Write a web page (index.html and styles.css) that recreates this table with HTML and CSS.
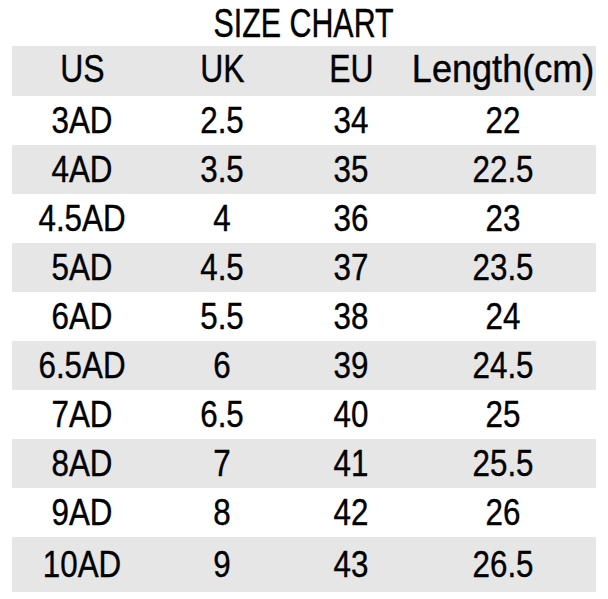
FILE: index.html
```html
<!DOCTYPE html>
<html>
<head>
<meta charset="utf-8">
<link rel="stylesheet" href="styles.css">
</head>
<body>
<div class="chart">
  <h1 class="title"><span>SIZE CHART</span></h1>
  <div class="row shade head"><span>US</span><span>UK</span><span>EU</span><span class="wide">Length(cm)</span></div>
  <div class="row"><span>3AD</span><span>2.5</span><span>34</span><span>22</span></div>
  <div class="row shade"><span>4AD</span><span>3.5</span><span>35</span><span>22.5</span></div>
  <div class="row"><span>4.5AD</span><span>4</span><span>36</span><span>23</span></div>
  <div class="row shade"><span>5AD</span><span>4.5</span><span>37</span><span>23.5</span></div>
  <div class="row"><span>6AD</span><span>5.5</span><span>38</span><span>24</span></div>
  <div class="row shade"><span>6.5AD</span><span>6</span><span>39</span><span>24.5</span></div>
  <div class="row"><span>7AD</span><span>6.5</span><span>40</span><span>25</span></div>
  <div class="row shade"><span>8AD</span><span>7</span><span>41</span><span>25.5</span></div>
  <div class="row"><span>9AD</span><span>8</span><span>42</span><span>26</span></div>
  <div class="row shade last"><span>10AD</span><span>9</span><span>43</span><span>26.5</span></div>
</div>
</body>
</html>
```
FILE: styles.css
```css
html, body {
  margin: 0;
  padding: 0;
  background: #ffffff;
}
.chart {
  width: 608px;
  font-family: "Liberation Sans", Arial, sans-serif;
  color: #000;
  -webkit-text-stroke: 0.4px #000;
}
.title {
  margin: 0;
  height: 46px;
  display: flex;
  align-items: center;
  justify-content: center;
  font-size: 40px;
  font-weight: normal;
  line-height: 1;
}
.title span {
  display: inline-block;
  transform: scaleX(0.76);
}
.row {
  margin: 0 12px;
  height: 49px;
  display: grid;
  grid-template-columns: 140px 140px 118px 186px;
  align-items: center;
  justify-items: center;
  font-size: 36px;
  line-height: 1;
}
.row span {
  display: inline-block;
  transform: scaleX(0.87);
  white-space: nowrap;
}
.head {
  height: 50px;
  font-size: 38px;
}
.head span {
  transform: translateY(-2px) scaleX(0.84);
}
.head .wide {
  transform: translateY(-2px) scaleX(0.95);
}
.last { height: 55px; }
.shade { background: #e6e6e6; }
```
